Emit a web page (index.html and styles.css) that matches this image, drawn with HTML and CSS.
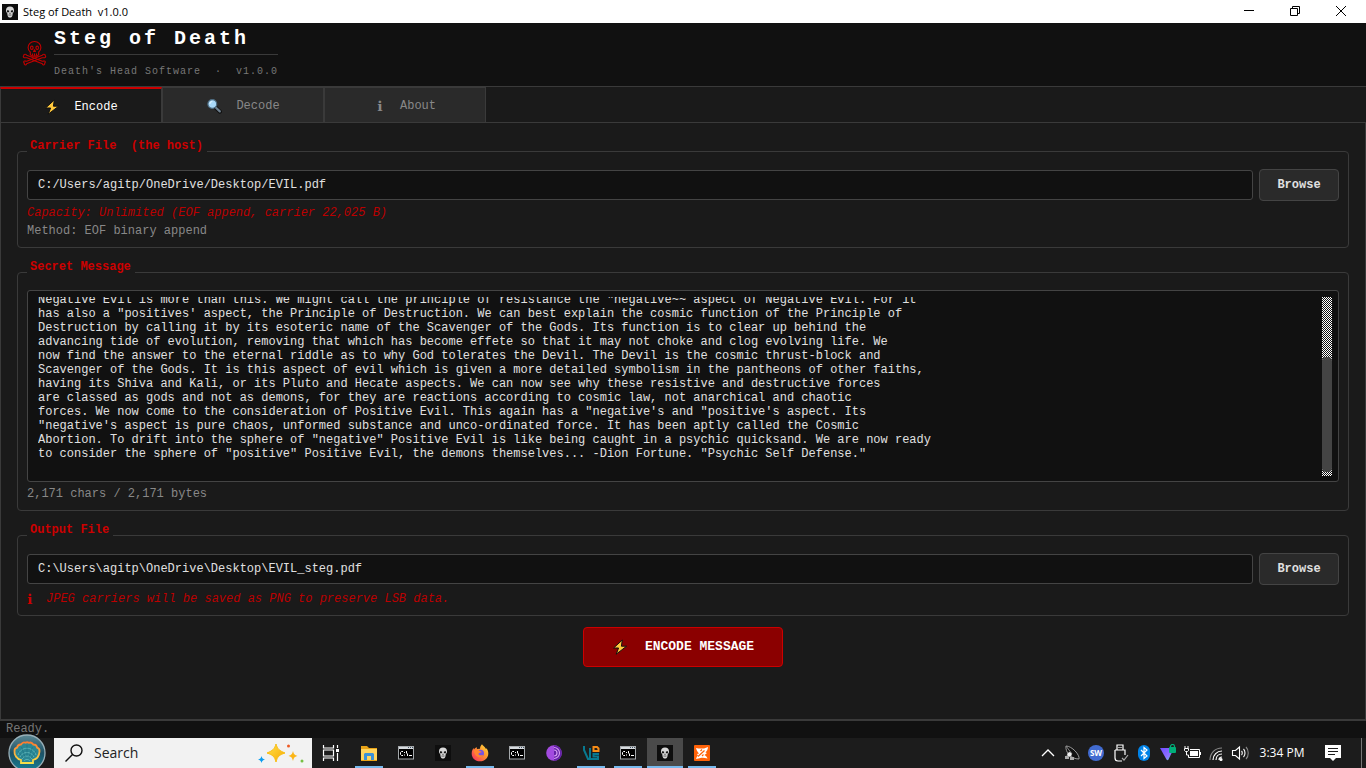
FILE: index.html
```html
<!DOCTYPE html>
<html lang="en">
<head>
<meta charset="utf-8">
<title>Steg of Death v1.0.0</title>
<link rel="stylesheet" href="styles.css">
</head>
<body>
<svg class="symbols" aria-hidden="true">
  <symbol id="skull" viewBox="0 0 16 16">
    <rect width="16" height="16" fill="#0e0e0e"/>
    <path d="M8 2.400C5.400 2.400 4 4 4 6.300c0 1.300.4 2.200 1.200 2.800l.4 2.400c.2 1.300 1 2.100 2.400 2.100s2.200-.8 2.400-2.100l.4-2.400c.8-.6 1.200-1.500 1.200-2.800C12 4 10.600 2.400 8 2.400z" fill="#d8d8d8"/>
    <path d="M5 6.500c1-.4 2-.1 2.300.6-.1 1-.8 1.500-1.700 1.300-.5-.3-.8-1-.6-1.900zM11 6.500c-1-.4-2-.1-2.300.6.1 1 .8 1.500 1.700 1.300.5-.3.8-1 .6-1.900zM8 8.300l.7 1.400H7.300z" fill="#151515"/>
    <path d="M6.300 11h3.400M7.200 10.500v1.400M8.700 10.500v1.400" stroke="#555" stroke-width=".5"/>
  </symbol>
  <symbol id="bolt" viewBox="0 0 16 16">
    <path d="M10.300 1 1.600 9h5L4.200 15.200 14.600 7.200H9.400z" fill="#ffc83d" stroke="#111" stroke-width="1" stroke-linejoin="round"/>
  </symbol>
  <symbol id="cmd" viewBox="0 0 16 14">
    <rect x=".5" y=".5" width="15" height="12.500" fill="#000" stroke="#a5a9ac"/>
    <path d="M1 1h14v2H1z" fill="#d6dade"/><path d="M10 1h1v1h-1zM12 1h1v1h-1zM14 1h1v1h-1z" fill="#456"/>
    <path d="M5 5.500H3.500l-1 1v2l1 1H5M6.500 6v1M6.500 8.500v1M8.500 5v2l1 1v2M11 9.500h3" fill="none" stroke="#fff"/>
  </symbol>
</svg>

<div class="titlebar">
  <svg class="i16"><use href="#skull"/></svg>
  <span class="window-title">Steg of Death&nbsp; v1.0.0</span>
  <div class="window-buttons">
    <button aria-label="Minimize"><svg class="i12" viewBox="0 0 12 12"><path d="M1 5.500h10"/></svg></button>
    <button aria-label="Restore"><svg class="i12" viewBox="0 0 12 12"><path d="M1.500 3.500h7v7h-7zM3.500 3.500v-2h7v7h-2"/></svg></button>
    <button aria-label="Close"><svg class="i12" viewBox="0 0 12 12"><path d="m1 1 10 10M11 1 1 11"/></svg></button>
  </div>
</div>

<header class="header">
  <svg class="crossbones" viewBox="0 0 24 26" fill="none" stroke="#c00000" stroke-width="1.100" stroke-linejoin="round">
    <path d="M12 1.500C8 1.500 5.600 4.200 5.600 7.600c0 2 .6 3.400 2.200 4.400v2.600l1.500 1.500h5.400l1.500-1.500V12c1.600-1 2.200-2.400 2.200-4.400 0-3.400-2.400-6.100-6.400-6.100z"/>
    <ellipse cx="9.300" cy="7.800" rx="1.300" ry="1.700"/><ellipse cx="14.700" cy="7.800" rx="1.300" ry="1.700"/>
    <path d="m12 9.700.9 1.700h-1.800zM10 13.500v2.300M12 13.500v2.300M14 13.500v2.300"/>
    <path d="M3 14.300c-1.300-.3-2 .6-1.700 1.500-.8.600-.6 1.700.5 2 1 .1 1.700-.2 2.500 0l15.600 6c.2 1.200 1.400 1.500 2.200.6.300-.5.200-1 0-1.300.9-.4 1-1.500.1-2-.9-.4-1.600.3-2.400.1l-15.500-6c-.4-.2-.6-.8-1.300-.9z"/>
    <path d="M21 14.300c1.300-.3 2 .6 1.700 1.500.8.600.6 1.700-.5 2-1 .1-1.700-.2-2.500 0l-15.600 6c-.2 1.200-1.400 1.500-2.200.6-.3-.5-.2-1 0-1.300-.9-.4-1-1.500-.1-2 .9-.4 1.600.3 2.400.1l15.500-6c.4-.2.600-.8 1.300-.9z"/>
  </svg>
  <div class="brand">
    <h1>Steg of Death</h1>
    <p>Death's Head Software&nbsp; · &nbsp;v1.0.0</p>
  </div>
</header>

<nav class="tabs" role="tablist">
  <button class="tab active" role="tab" aria-selected="true"><svg class="i16"><use href="#bolt"/></svg><span>Encode</span></button>
  <button class="tab" role="tab" aria-selected="false"><svg class="i16" viewBox="0 0 16 16"><path d="m9 9 5 4.700" stroke="#111" stroke-width="4" stroke-linecap="round"/><path d="m10 9.800 3.800 3.600" stroke="#6d7f8e" stroke-width="2.200" stroke-linecap="round"/><circle cx="6.300" cy="6" r="4.400" fill="#a8d8f8" stroke="#4d6b80" stroke-width="1.200"/><path d="M3.800 6A2.500 2.500 0 0 1 6.300 3.500" stroke="#e8f7ff" fill="none"/></svg><span>Decode</span></button>
  <button class="tab" role="tab" aria-selected="false"><span class="info">ℹ</span><span>About</span></button>
</nav>

<main class="pane">
  <fieldset>
    <legend>Carrier File&nbsp; (the host)</legend>
    <div class="row">
      <input type="text" aria-label="Carrier file" value="C:/Users/agitp/OneDrive/Desktop/EVIL.pdf">
      <button class="browse">Browse</button>
    </div>
    <p class="hint red">Capacity: Unlimited (EOF append, carrier 22,025 B)</p>
    <p class="hint">Method: EOF binary append</p>
  </fieldset>

  <fieldset>
    <legend>Secret Message</legend>
    <div class="editor">
      <textarea id="message" wrap="off" spellcheck="false" aria-label="Secret message">Negative Evil is more than this. We might call the principle of resistance the "negative~~ aspect of Negative Evil. For it
has also a "positives' aspect, the Principle of Destruction. We can best explain the cosmic function of the Principle of
Destruction by calling it by its esoteric name of the Scavenger of the Gods. Its function is to clear up behind the
advancing tide of evolution, removing that which has become effete so that it may not choke and clog evolving life. We
now find the answer to the eternal riddle as to why God tolerates the Devil. The Devil is the cosmic thrust-block and
Scavenger of the Gods. It is this aspect of evil which is given a more detailed symbolism in the pantheons of other faiths,
having its Shiva and Kali, or its Pluto and Hecate aspects. We can now see why these resistive and destructive forces
are classed as gods and not as demons, for they are reactions according to cosmic law, not anarchical and chaotic
forces. We now come to the consideration of Positive Evil. This again has a "negative's and "positive's aspect. Its
"negative's aspect is pure chaos, unformed substance and unco-ordinated force. It has been aptly called the Cosmic
Abortion. To drift into the sphere of "negative" Positive Evil is like being caught in a psychic quicksand. We are now ready
to consider the sphere of "positive" Positive Evil, the demons themselves... -Dion Fortune. "Psychic Self Defense."</textarea>
      <svg class="scrollbar" aria-hidden="true">
        <defs><pattern id="dither" width="2" height="2" patternUnits="userSpaceOnUse"><path d="M0 0h1v1H0zM1 1h1v1H1z" fill="#fff" shape-rendering="crispEdges"/></pattern></defs>
        <rect width="10" height="100%" fill="url(#dither)"/>
        <rect y="60" width="10" height="115" rx="4" fill="#444"/>
      </svg>
    </div>
    <p class="hint">2,171 chars / 2,171 bytes</p>
  </fieldset>

  <fieldset>
    <legend>Output File</legend>
    <div class="row">
      <input type="text" aria-label="Output file" value="C:\Users\agitp\OneDrive\Desktop\EVIL_steg.pdf">
      <button class="browse">Browse</button>
    </div>
    <p class="hint red note"><span class="info">ℹ</span>JPEG carriers will be saved as PNG to preserve LSB data.</p>
  </fieldset>

  <button class="encode"><svg class="i16"><use href="#bolt"/></svg><span>ENCODE MESSAGE</span></button>
</main>

<div class="status" role="status">Ready.</div>

<footer class="taskbar">
  <button class="start" aria-label="Start">
    <svg viewBox="0 0 38 38">
      <defs><linearGradient id="orb" x2="0" y2="1"><stop stop-color="#5b8793"/><stop offset=".5" stop-color="#1d5266"/><stop offset="1" stop-color="#168095"/></linearGradient><linearGradient id="shell" x2="0" y2="1"><stop stop-color="#ff7a2e"/><stop offset="1" stop-color="#f6e04a"/></linearGradient></defs>
      <circle cx="19" cy="19" r="18" fill="url(#orb)" stroke="#98afb8" stroke-width="1.300"/>
      <path d="M13 29v-3c-4-1-7-5-6.500-9 0-2 1-3 2.500-3.300C9.500 11.500 11 10.300 13 10.500c1.200-1.800 3-2.500 4.500-1.700 1-.7 2.200-.7 3.200 0 2-.7 3.700 0 4.600 1.700 2.200-.1 3.500 1.200 3.900 3.200 1.900.6 2.500 2 2.300 3.900-.3 4.200-3 7.500-6.500 8.400v3z" fill="#2b8794" stroke="url(#shell)" stroke-width="1.800"/>
      <path d="M10 21c3-9 15-9 18 0M12 23c3-6 11-6 14 0M14 25c2-4 8-4 10 0M16 27c1-2 5-2 6 0" stroke="#5db4b8" fill="none"/>
      <path d="m15 24-5-7M17 23l-3.500-10M19 22V11M21 23l3.500-10M23 24l5-7" stroke="#1d6f82" stroke-width=".6" fill="none"/>
    </svg>
  </button>
  <label class="search">
    <svg class="i20" viewBox="0 0 20 20" fill="none" stroke="#111" stroke-width="1.400"><circle cx="12.500" cy="7.500" r="5.500"/><path d="m8.500 11.500-7 7"/></svg>
    <input type="text" placeholder="Search" aria-label="Search">
    <svg class="sparkles" viewBox="0 0 46 22">
      <defs><linearGradient id="gold" x2="1" y2="1"><stop stop-color="#ffe24a"/><stop offset="1" stop-color="#f8a800"/></linearGradient></defs>
      <path d="M18 2c1.500 5 3 6.500 9 9-6 2-7.500 3.500-9 9-1.500-5.500-3-7-9-9 6-2.500 7.500-4 9-9z" fill="url(#gold)" stroke="#f9bd13" stroke-linejoin="round"/>
      <path d="M35 9c.8 3 1.500 4 4.500 5-3 .8-3.700 1.800-4.500 5-.8-3.200-1.500-4.200-4.500-5 3-1 3.700-2 4.500-5z" fill="#fbb516"/>
      <path d="M3.500 14c.7 2.500 1.200 3 3.500 3.500-2.300.7-2.800 1.200-3.500 3.500C2.800 18.700 2.300 18.200 0 17.500c2.300-.5 2.800-1 3.500-3.500z" fill="#0a9cf0"/>
      <circle cx="30.500" cy="4" r="1.500" fill="#ee5a24"/><circle cx="44" cy="19" r="1.500" fill="#76c043"/>
    </svg>
  </label>
  <div class="apps">
    <button aria-label="Task View"><svg class="i18" viewBox="0 0 18 18" fill="none" stroke="#fff" stroke-width="1.200"><path d="M1.500 1v3h10V1M1.500 17v-3h10v3M1.500 6h10v6h-10zM15.500 1v3M15.500 9v8"/><path d="M14 5h3v3h-3z" fill="#fff" stroke="none"/></svg></button>
    <button class="open" aria-label="File Explorer"><svg class="i18" viewBox="0 0 18 18"><path d="M1 2h6l2 2h8v13H1z" fill="#e8a317"/><path d="M1 5h16v11H1z" fill="#ffd45e"/><path d="M4 10l1-1h8l1 1v6h-3v-4H7v4H4z" fill="#3a91d8"/></svg></button>
    <button aria-label="Command Prompt"><svg class="term"><use href="#cmd"/></svg></button>
    <button aria-label="Steg of Death"><svg class="i16"><use href="#skull"/></svg></button>
    <button class="open" aria-label="Firefox"><svg class="i18" viewBox="0 0 18 18"><defs><linearGradient id="fox" x1="1" x2="0" y2="1"><stop stop-color="#ffe63b"/><stop offset=".45" stop-color="#ff9030"/><stop offset="1" stop-color="#f52466"/></linearGradient></defs><path d="M9 17.300C4 17.300.7 14 .7 9.500c0-2.500 1-4.400 1.900-5.500l.4 1.500C4 4 5 3.500 5.500 3l.5 2 3-.2C9 3 9.800 1.500 11 .3c.6 1.600 3 2.400 4 4.600l.5-.6c1.200 1.500 1.800 3.200 1.800 5.200 0 4.500-3.500 7.800-8.300 7.800z" fill="url(#fox)"/><circle cx="9.500" cy="9.300" r="3.500" fill="#7652e5"/><path d="M3 6c2-1 4-.3 5.500.8L11 8 8 9c-1 .8-.5 2 1 2.200 1.800.3 2.500-.3 3.500-.2-.8 2-3 2.600-5 2C4.500 12.300 2.800 9 3 6z" fill="#ff842f"/></svg></button>
    <button aria-label="Command Prompt"><svg class="term"><use href="#cmd"/></svg></button>
    <button aria-label="Tor Browser"><svg class="i16" viewBox="0 0 16 16"><circle cx="8" cy="8" r="7.800" fill="#a34be0"/><path d="M8 .2a7.800 7.800 0 0 1 0 15.600z" fill="#6422a6"/><path d="M8 2.500a5.500 5.500 0 0 1 0 11M8 5a3 3 0 0 1 0 6" fill="none" stroke="#d49bf2" stroke-width="1.200"/></svg></button>
    <button class="open" aria-label="VS editor"><svg class="i18" viewBox="0 0 18 18" fill="none"><path d="M2 2v4l4 9h2V4M17 10h-5.500v2.500H16V15H9" stroke="#087990" stroke-width="2"/><path d="M11.500 7V3h3.500l1.500 1.500V7z" stroke="#f58b16" stroke-width="2"/></svg></button>
    <button class="open" aria-label="Command Prompt"><svg class="term"><use href="#cmd"/></svg></button>
    <button class="open current" aria-label="Steg of Death window"><svg class="i16"><use href="#skull"/></svg></button>
    <button class="open" aria-label="Image editor"><svg class="i16" viewBox="0 0 16 16"><rect width="16" height="16" rx="1" fill="#ff6208"/><path d="M2 3c3 .8 6 .6 8 .4L14 2c-.3 2.500-1 4-2.500 5.500L13 8l-2.500 2c1.500.8 2.500 2 3 3.500-3-1-5-1-7-.6L2 14c.5-1.500 1-2.500 2-3.500L3 9l2-.5C3.500 7 2.500 5 2 3z" fill="#fff"/><path d="m4 11.500 6.500-6M8 4.500 6.500 6M8 11l1.500-1.500" stroke="#ff6208" stroke-width="1.200"/></svg></button>
  </div>
  <div class="tray">
    <button aria-label="Show hidden icons"><svg class="i18" viewBox="0 0 18 18"><path d="m3 12 6-6 6 6" fill="none" stroke="#fff" stroke-width="1.300"/></svg></button>
    <button aria-label="Satellite"><svg class="i18" viewBox="0 0 18 18" fill="none"><path d="M3 2c-1 6 5 13 13 13 1-4-7-13-13-13z" fill="#111" stroke="#999"/><path d="m3 2 6 8M7 8l-4 5" stroke="#888"/><circle cx="6.500" cy="10.500" r="2.200" fill="#eee"/><path d="M2 12h4v3H2zM7 13h4v3H7z" fill="#aaa"/></svg></button>
    <button class="sw" aria-label="SW"><span>SW</span></button>
    <button aria-label="USB device"><svg class="i18" viewBox="0 0 18 18" fill="none" stroke="#fff" stroke-width="1.200"><path d="M6 6V1h6v5M4 6h10v5M4 6v8c0 2 1 3 3 3h4M8 3v1M10 3v1"/><path d="m11 14 2 2 4-5" stroke="#aaa"/></svg></button>
    <button aria-label="Bluetooth"><svg class="i18" viewBox="0 0 18 18"><rect x="3" y="1" width="12" height="16" rx="6" fill="#0083e8"/><path d="m6 6 6 6-3 2.500v-11L12 6l-6 6" fill="none" stroke="#fff" stroke-width="1.200"/></svg></button>
    <button aria-label="VPN"><svg class="i18" viewBox="0 0 18 18"><defs><linearGradient id="vpn" x1="0" y1="0" x2="1" y2="1"><stop stop-color="#704cff"/><stop offset=".6" stop-color="#8d70ff"/><stop offset="1" stop-color="#4de2c5"/></linearGradient></defs><path d="M1 4h14L9.500 15.500c-.6 1-1.400 1-2 0z" fill="url(#vpn)"/><rect x="10" y="3" width="7" height="6" rx="1" fill="#00ae78"/><path d="M11.500 3V2.500a2 2 0 0 1 4 0V3" fill="none" stroke="#00ae78" stroke-width="1.200"/></svg></button>
    <button aria-label="Battery"><svg class="i18" viewBox="0 0 18 18" fill="none" stroke="#fff"><path d="M7 5.500h9.500v8h-11V11M17.500 8v3M2 2v2M5 2v2M1.500 4.500h4v2l-1 1h-2l-1-1zM3.500 8v3h2"/><path d="M7 7h8v5H7z" fill="#fff" stroke="none"/></svg></button>
    <button aria-label="Wi-Fi"><svg class="i18" viewBox="0 0 18 18" fill="none" stroke="#fff" stroke-width="1.200"><path d="M3 16C3 9 8 4 15 4" stroke="#888"/><path d="M6 16c0-5 4-9 9-9M9 16c0-3.500 2.500-6 6-6M12 16c0-1.800 1.200-3 3-3"/><circle cx="14" cy="15.500" r="1" fill="#fff"/></svg></button>
    <button aria-label="Volume"><svg class="i18" viewBox="0 0 18 18" fill="none" stroke="#fff" stroke-width="1.100"><path d="M1.500 6.500h3l4-3.500v12l-4-3.500h-3zM10.500 7c1 1 1 3 0 4M12.500 5c2 2 2 6 0 8"/><path d="M15 3c3 3 3 9 0 12" stroke="#888"/></svg></button>
    <time datetime="15:34">3:34 PM</time>
    <button class="notices" aria-label="Notifications"><svg class="i18" viewBox="0 0 18 18"><path d="M1 1h16v13h-5l-3 3-3-3H1z" fill="#fff"/><path d="M4 4.500h10M4 7.500h10M4 10.500h7" stroke="#1c1c1c"/></svg></button>
    <button class="desktop" aria-label="Show desktop"></button>
  </div>
</footer>
<script>
  const message = document.getElementById("message");
  message.scrollTop = message.scrollHeight;
</script>
</body>
</html>
```

FILE: styles.css
```css
* { box-sizing: border-box; }
body {
  margin: 0;
  min-height: 100vh;
  display: flex;
  flex-direction: column;
  background: #1a1a1a;
  color: #e0e0e0;
  font: 12px/14px "Courier New", "Liberation Mono", monospace;
}
button, input, textarea { font: inherit; color: inherit; }
button { padding: 0; border: 0; background: none; }
p, h1 { margin: 0; }
svg { display: block; flex: none; }
.symbols { position: absolute; width: 0; height: 0; }
.i12 { width: 12px; height: 12px; }
.i16 { width: 16px; height: 16px; }
.i18 { width: 18px; height: 18px; }
.i20 { width: 20px; height: 20px; }

.titlebar {
  display: flex;
  align-items: center;
  gap: 5px;
  height: 23px;
  padding: 0 2px;
  background: #fff;
  color: #000;
  font: 11px/16px "Open Sans", sans-serif;
}
.window-buttons { display: flex; align-self: stretch; margin-left: auto; }
.window-buttons button { display: grid; place-items: center; width: 46px; padding-bottom: 2px; }
.window-buttons path { fill: none; stroke: #000; }

.header {
  display: flex;
  align-items: center;
  gap: 7px;
  height: 64px;
  padding-left: 22px;
  background: #111;
  border-bottom: 1px solid #3a3a3a;
}
.crossbones { width: 25px; height: 26px; margin-top: -4px; }
h1 {
  height: 32px;
  border-bottom: 1px solid #3a3a3a;
  color: #fff;
  font-size: 20px;
  line-height: 32px;
  letter-spacing: 3px;
}
.brand { align-self: flex-start; }
.brand p { color: #777; font-size: 10px; line-height: 34px; letter-spacing: 1px; }

.tabs { display: flex; height: 36px; border-bottom: 1px solid #3a3a3a; }
.tab {
  display: flex;
  align-items: center;
  justify-content: center;
  gap: 14px;
  width: 162px;
  padding-top: 2px;
  border: 1px solid #3a3a3a;
  border-bottom: 0;
  background: #2a2a2a;
  color: #888;
}
.tab.active { border-top: 2px solid #c00; background: #1a1a1a; color: #fff; }
.info { width: 12px; font: bold 14px/14px "DejaVu Sans", sans-serif; }

.pane {
  flex: 1;
  display: flex;
  flex-direction: column;
  gap: 11px;
  padding: 15px 16px;
  border: 1px solid #3a3a3a;
  border-width: 0 1px 2px;
}
fieldset {
  display: block;
  min-width: 0;
  margin: 0;
  padding: 5px 9px 9px;
  border: 1px solid #3a3a3a;
  border-radius: 4px;
}
legend { padding: 1px 4px 11px 3px; color: #c00; font-weight: bold; }
.row { display: flex; align-items: center; gap: 6px; }
.row input {
  flex: 1;
  min-width: 0;
  height: 30px;
  padding: 0 10px;
  border: 1px solid #444;
  border-radius: 3px;
  background: #111;
}
.browse {
  width: 80px;
  height: 32px;
  border: 1px solid #444;
  border-radius: 4px;
  background: #2a2a2a;
  font-weight: bold;
}
.hint { margin-top: 4px; padding-top: 1px; margin-bottom: -1px; color: #888; }
.hint:last-child { margin-bottom: 0; }
.red { color: #b00; font-style: italic; }
.note { display: flex; gap: 7px; margin-top: 6px; }
.note .info { color: #c00; font-style: italic; }
.editor {
  display: flex;
  padding: 5px 6px 5px 10px;
  border: 1px solid #444;
  border-radius: 3px;
  background: #111;
}
textarea {
  flex: 1;
  min-width: 0;
  height: 179px;
  margin-top: 1px;
  padding: 0 0 15px;
  border: 0;
  outline: 0;
  background: none;
  resize: none;
  overflow: hidden;
}
.scrollbar { width: 10px; height: 179px; margin-top: 1px; }
.encode {
  display: flex;
  align-items: center;
  justify-content: center;
  align-self: center;
  gap: 17px;
  width: 200px;
  height: 40px;
  border: 1px solid #c00;
  border-radius: 4px;
  background: #8b0000;
  color: #fff;
  font-size: 13px;
  font-weight: bold;
}
.status { height: 17px; padding-left: 6px; background: #111; color: #777; line-height: 16px; }

.taskbar {
  display: flex;
  align-items: stretch;
  height: 30px;
  background: #1c1c1c;
  color: #fff;
  font: 12px/16px "Open Sans", sans-serif;
}
.start { width: 54px; }
.start svg { width: 38px; height: 38px; margin: -4px 8px; }
.search {
  display: flex;
  align-items: center;
  gap: 10px;
  width: 258px;
  padding: 0 8px 0 10px;
  background: #f2f2f2;
  color: #222;
}
.search input { flex: 1; min-width: 0; padding: 0; border: 0; background: none; font-size: 14px; }
.search input::placeholder { color: #222; opacity: 1; }
.sparkles { width: 46px; height: 22px; }
.apps { display: flex; }
.apps button { display: grid; place-items: center; width: 37px; }
.apps button:first-child { width: 38px; }
.apps .open { background: linear-gradient(#76b9ed, #76b9ed) center bottom / 28px 2px no-repeat; }
.apps .current { background: linear-gradient(#76b9ed, #76b9ed) center bottom / 36px 2px no-repeat, linear-gradient(#4a4a4a, #4a4a4a) center / 36px 100% no-repeat; }
.term { width: 16px; height: 14px; }
.tray { display: flex; margin-left: auto; }
.tray button { display: grid; place-items: center; width: 24px; }
.sw span {
  width: 16px;
  border-radius: 8px;
  background: #416bd0;
  font: bold 8px/16px "Open Sans", sans-serif;
  text-align: center;
}
time { width: 60px; align-self: center; text-align: center; }
.tray .notices { width: 42px; }
.tray .desktop { width: 5px; margin-left: 7px; border-left: 1px solid #777; }
```
